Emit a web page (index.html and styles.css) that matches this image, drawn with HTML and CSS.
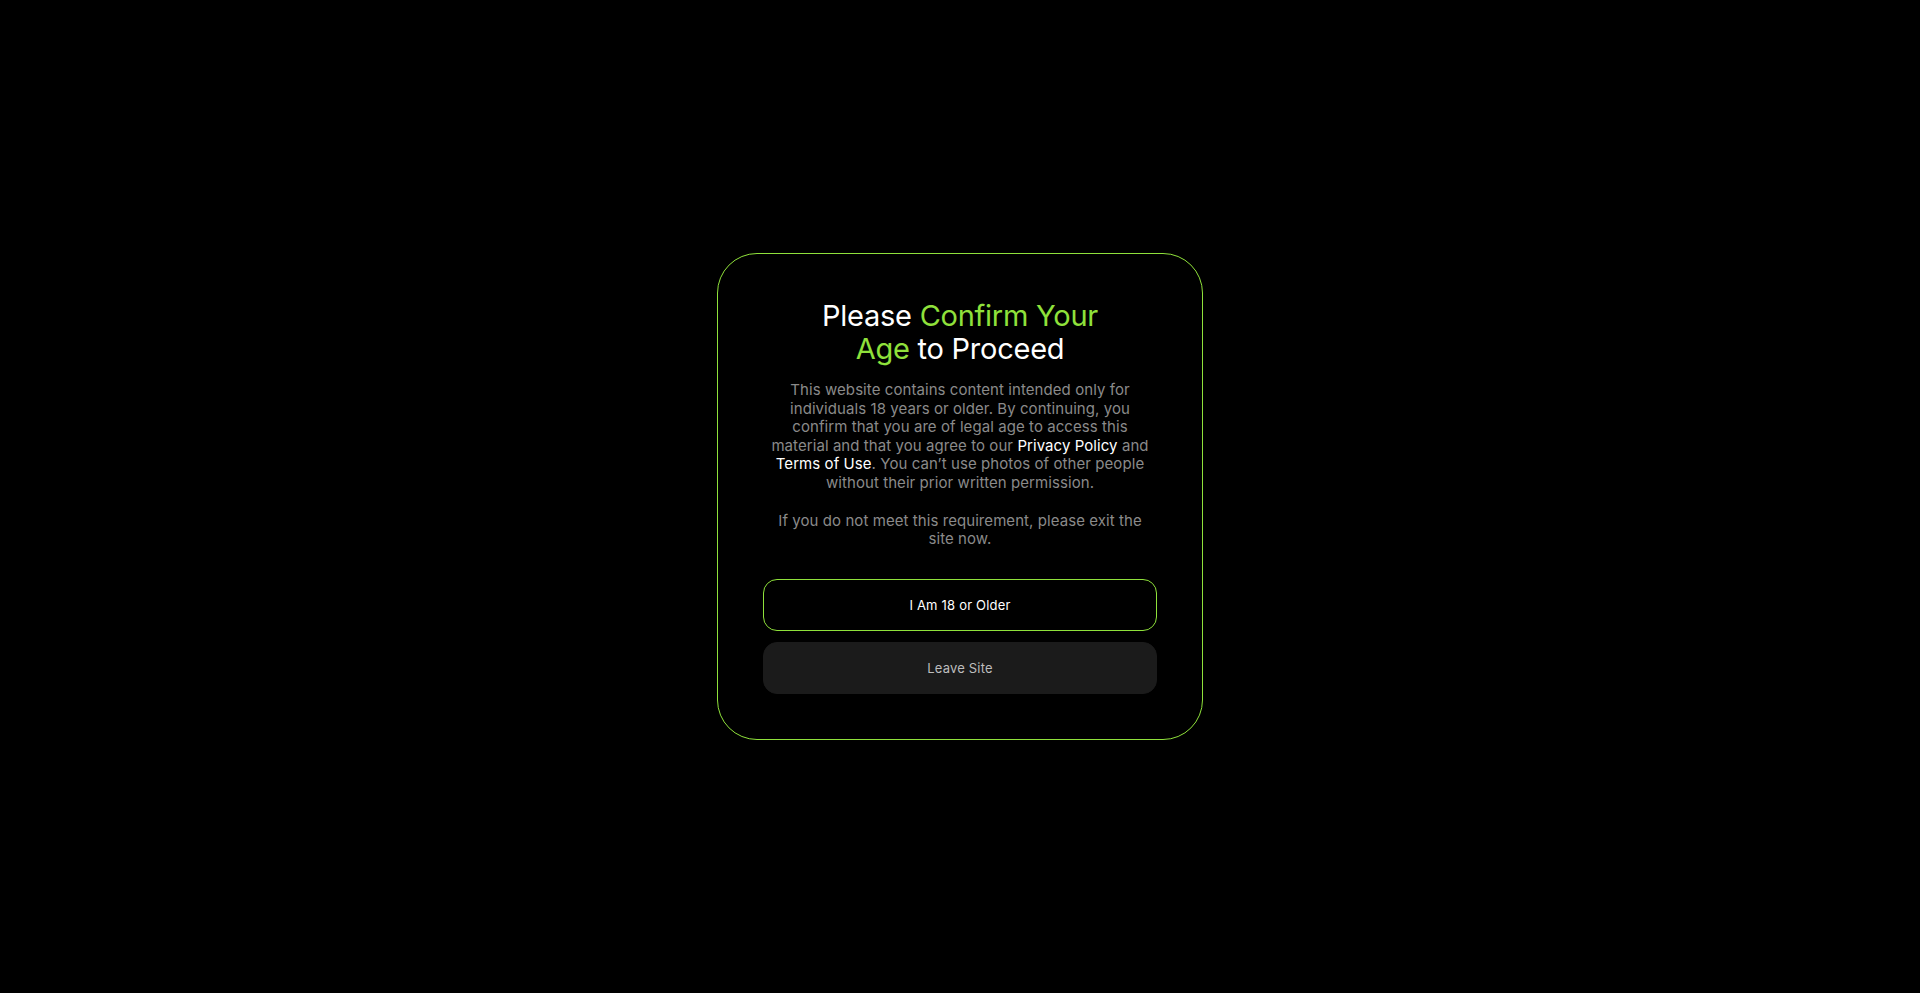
FILE: index.html
```
<!DOCTYPE html>
<html lang="en">
<head>
<meta charset="utf-8">
<title>Age Verification</title>
<link rel="stylesheet" href="styles.css">
</head>
<body>
<main class="overlay">
  <section class="card">
    <h1 class="title">Please <span class="accent">Confirm Your Age</span> to Proceed</h1>
    <div class="copy">
      <p>This website contains content intended only for individuals 18 years or older. By continuing, you confirm that you are of legal age to access this material and that you agree to our <a href="#" class="link">Privacy Policy</a> and <a href="#" class="link">Terms of Use</a>. You can’t use photos of other people without their prior written permission.</p>
      <p>If you do not meet this requirement, please exit the site now.</p>
    </div>
    <div class="actions">
      <button class="btn btn-confirm" type="button">I Am 18 or Older</button>
      <button class="btn btn-leave" type="button">Leave Site</button>
    </div>
  </section>
</main>
</body>
</html>
```
FILE: styles.css
```
* { box-sizing: border-box; }
html, body { margin: 0; padding: 0; height: 100%; }
body {
  background: #000;
  font-family: Inter, "Noto Sans", sans-serif;
  color: #fff;
}
.overlay {
  height: 100%;
  display: flex;
  align-items: center;
  justify-content: center;
}
.card {
  width: 486px;
  padding: 45px;
  border: 1px solid #8fe13b;
  border-radius: 40px;
  display: flex;
  flex-direction: column;
  align-items: center;
  text-align: center;
}
.title {
  margin: 0;
  width: 290px;
  font-size: 29px;
  font-weight: 400;
  line-height: 33px;
  letter-spacing: -0.25px;
}
.accent { color: #8fe13b; }
.copy {
  margin-top: 16px;
  width: 382px;
  color: #8a8a8a;
  font-size: 15px;
  line-height: 18.5px;
  letter-spacing: 0.07px;
}
.copy p { margin: 0; }
.copy p + p { margin-top: 19.5px; }
.link { color: #fff; text-decoration: none; }
.actions {
  margin-top: 30px;
  width: 100%;
  display: flex;
  flex-direction: column;
  gap: 11px;
}
.btn {
  height: 52px;
  width: 100%;
  border-radius: 14px;
  font-family: Inter, "Noto Sans", sans-serif;
  font-size: 13px;
  letter-spacing: 0.2px;
  cursor: pointer;
}
.btn-confirm {
  background: #000;
  color: #fff;
  border: 1px solid #8fe13b;
}
.btn-leave {
  background: #1b1b1b;
  color: #bdbdbd;
  border: 1px solid #1b1b1b;
}
```
